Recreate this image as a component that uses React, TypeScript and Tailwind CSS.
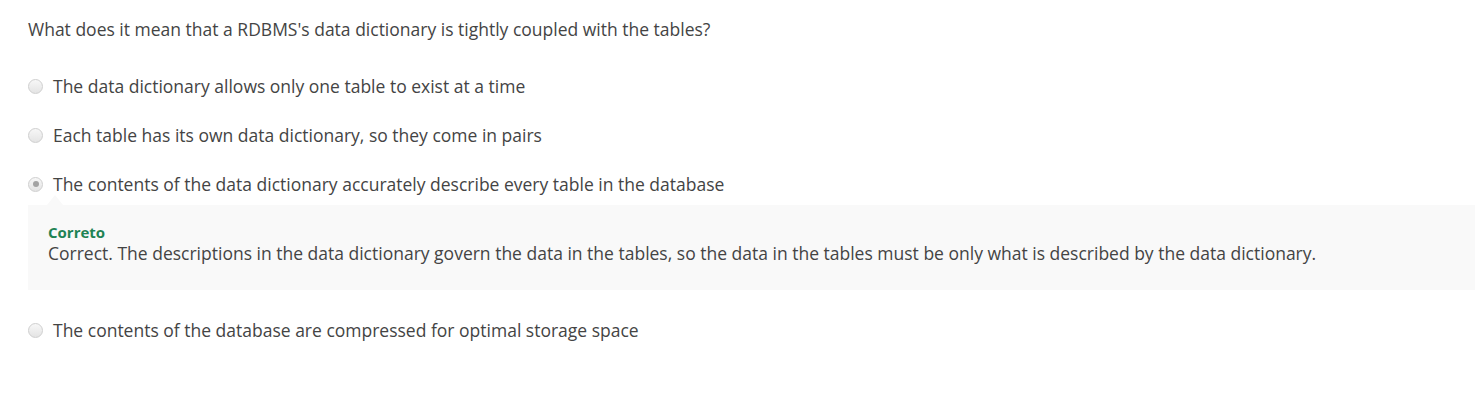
import React from 'react';

// ── Radio option ─────────────────────────────────────────────

interface OptionProps {
  label: string;
  checked?: boolean;
  className?: string;
}

const Radio: React.FC<{ checked?: boolean }> = ({ checked }) => (
  <span className="flex h-[15px] w-[15px] shrink-0 items-center justify-center rounded-full border border-[#cfcfcf] bg-gradient-to-b from-[#f7f7f7] to-[#e4e4e4]">
    {checked && <span className="h-[6px] w-[6px] rounded-full bg-[#a3a3a3]" />}
  </span>
);

const Option: React.FC<OptionProps> = ({ label, checked, className = '' }) => (
  <label className={`flex h-[24px] items-center gap-[10px] pl-[28px] ${className}`}>
    <Radio checked={checked} />
    <span className="text-[17.5px] leading-[24px] text-[#444]">{label}</span>
  </label>
);

export default function App() {
  return (
    <div className="h-[401px] w-[1475px] overflow-hidden bg-white font-['Open_Sans',sans-serif]">
      <p className="pl-[28px] pt-[17px] text-[17.5px] leading-[24px] text-[#444]">
        What does it mean that a RDBMS's data dictionary is tightly coupled with the tables?
      </p>

      <Option className="mt-[33px]" label="The data dictionary allows only one table to exist at a time" />
      <Option className="mt-[25px]" label="Each table has its own data dictionary, so they come in pairs" />
      <Option
        className="mt-[25px]"
        label="The contents of the data dictionary accurately describe every table in the database"
        checked
      />

      {/* feedback panel */}
      <div className="relative ml-[28px] mt-[9px] h-[85px] bg-[#f9f9f9] pl-[20px] pt-[19px]">
        <span className="absolute -top-[10px] left-[19px] h-0 w-0 border-x-[8px] border-b-[10px] border-x-transparent border-b-[#f9f9f9]" />
        <div className="text-[15px] font-bold leading-[16px] text-[#1f8354]">Correto</div>
        <div className="mt-[1px] text-[17.5px] leading-[24px] text-[#444]">
          Correct. The descriptions in the data dictionary govern the data in the tables, so the data in the tables must be only what is described by the data dictionary.
        </div>
      </div>

      <Option className="mt-[28px]" label="The contents of the database are compressed for optimal storage space" />
    </div>
  );
}
